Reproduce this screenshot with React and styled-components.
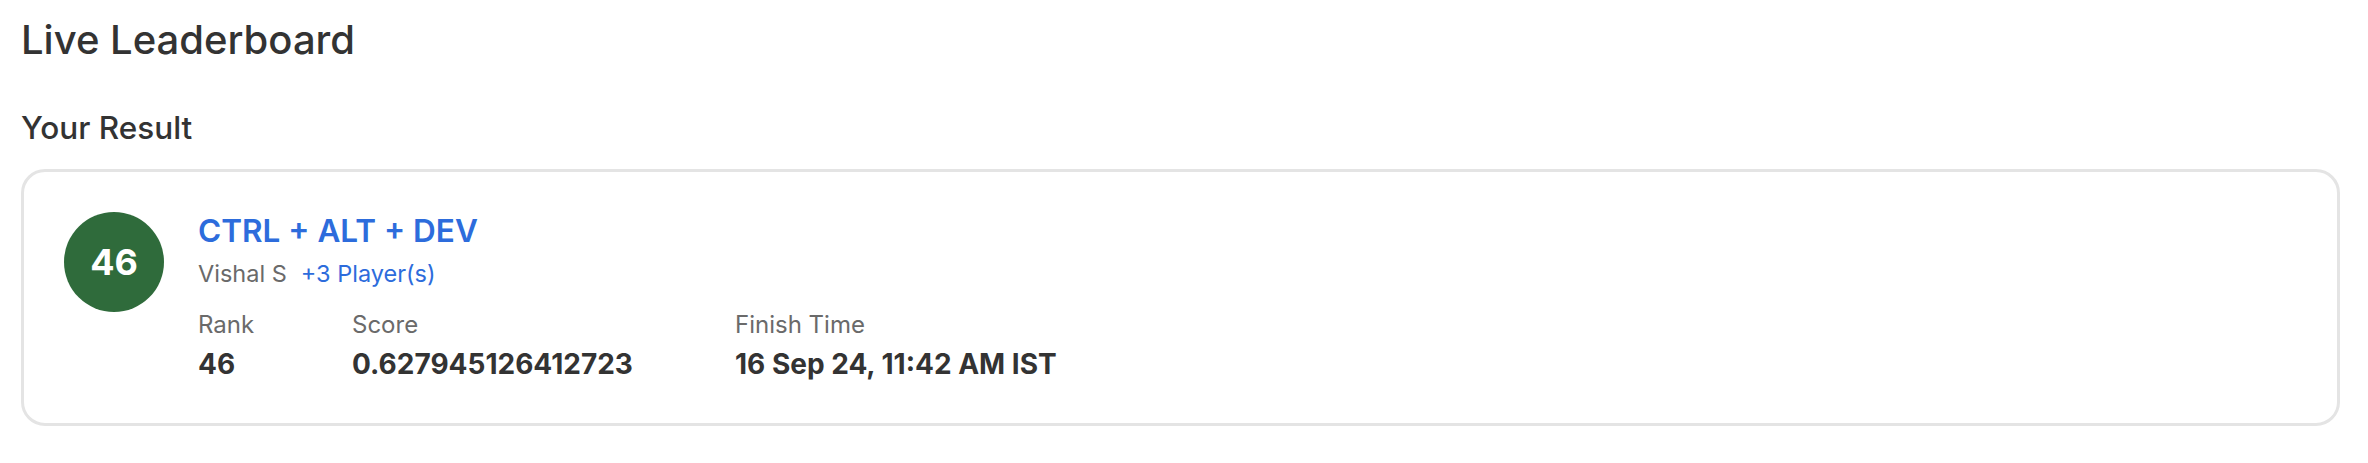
import React from 'react'
import styled, { createGlobalStyle } from 'styled-components';

const GlobalStyle = createGlobalStyle`
    body {
        margin: 0;
        background: #ffffff;
        font-family: Inter, "Noto Sans", "Liberation Sans", sans-serif;
        color: #333333;
    }
`

const PageWrapper = styled.div`
    padding: 16px 28px 24px 21px;
`

const Title = styled.h1`
    margin: 0;
    font-size: 40px;
    line-height: 48px;
    font-weight: 500;
    color: #333333;
`

const SectionTitle = styled.h2`
    margin: 45px 0 22px;
    font-size: 31.5px;
    line-height: 38px;
    font-weight: 500;
    color: #333333;
`

const ResultCard = styled.div`
    display: flex;
    align-items: flex-start;
    gap: 34px;
    padding: 40px 40px 42px;
    border: 3px solid #e4e4e4;
    border-radius: 24px;
    background: #ffffff;
`

const RankBadge = styled.div`
    flex: none;
    width: 100px;
    height: 100px;
    border-radius: 50%;
    background-color: #2f6b3b;
    color: #ffffff;
    display: flex;
    align-items: center;
    justify-content: center;
    font-size: 36px;
    font-weight: 700;
`

const ResultContent = styled.div`
    display: flex;
    flex-direction: column;
`

const TeamName = styled.div`
    font-size: 31.5px;
    line-height: 38px;
    font-weight: 600;
    color: #2d6cdc;
`

const Players = styled.div`
    display: flex;
    gap: 14px;
    margin-top: 10px;
    font-size: 23.5px;
    line-height: 28px;
    color: #6a6a6a;

    span {
        color: #2d6cdc;
    }
`

const StatsRow = styled.div`
    display: grid;
    grid-template-columns: 154px 383px auto;
    margin-top: 23px;
`

const Stat = styled.div`
    display: flex;
    flex-direction: column;
    gap: 9px;
`

const StatLabel = styled.div`
    font-size: 24px;
    line-height: 28px;
    color: #6a6a6a;
`

const StatValue = styled.div`
    font-size: 28px;
    line-height: 33px;
    font-weight: 700;
    color: #333333;
`

const result = {
  rank: 46,
  team: 'CTRL + ALT + DEV',
  captain: 'Vishal S',
  others: 3,
  score: '0.627945126412723',
  finishedAt: '16 Sep 24, 11:42 AM IST'
}

const App = () => {
  const stats = [
    { label: 'Rank', value: result.rank },
    { label: 'Score', value: result.score },
    { label: 'Finish Time', value: result.finishedAt }
  ]

  return (
    <PageWrapper>
        <GlobalStyle />
        <Title>Live Leaderboard</Title>
        <SectionTitle>Your Result</SectionTitle>
        <ResultCard>
            <RankBadge>{result.rank}</RankBadge>
            <ResultContent>
                <TeamName>{result.team}</TeamName>
                <Players>
                    {result.captain}
                    <span>{`+${result.others} Player(s)`}</span>
                </Players>
                <StatsRow>
                    {stats.map(stat => (
                        <Stat key={stat.label}>
                            <StatLabel>{stat.label}</StatLabel>
                            <StatValue>{stat.value}</StatValue>
                        </Stat>
                    ))}
                </StatsRow>
            </ResultContent>
        </ResultCard>
    </PageWrapper>
  )
}

export default App
